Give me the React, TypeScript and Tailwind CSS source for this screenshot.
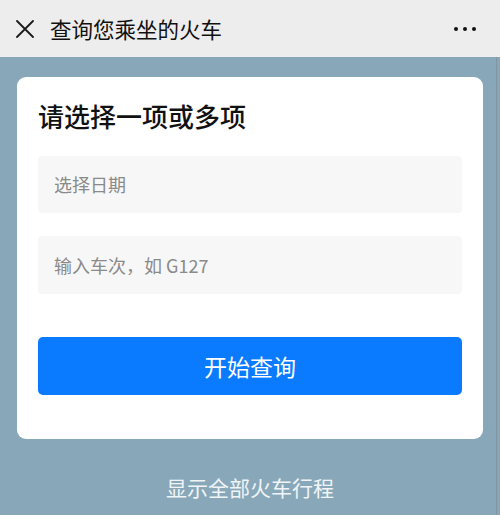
const font = { fontFamily: '"Noto Sans CJK SC", "Noto Sans", sans-serif' }

export default function App() {
  return (
    <div className="w-[500px] h-[515px] flex flex-col bg-[#88a8ba] overflow-hidden" style={font}>
      <header className="h-[57px] shrink-0 bg-[#ededed] flex items-center pl-[16px] pr-[24px]">
        <svg width="18" height="18" viewBox="0 0 18 18" className="text-[#1a1a1a]">
          <path d="M1 1L17 17M17 1L1 17" stroke="currentColor" strokeWidth="1.8" strokeLinecap="round" />
        </svg>
        <h1 className="ml-[16px] text-[21.5px] text-[#111] leading-none">查询您乘坐的火车</h1>
        <div className="ml-auto flex items-center gap-[5px]">
          <span className="w-[4px] h-[4px] rounded-full bg-[#111]" />
          <span className="w-[4px] h-[4px] rounded-full bg-[#111]" />
          <span className="w-[4px] h-[4px] rounded-full bg-[#111]" />
        </div>
      </header>

      <div className="flex-1 flex">
        <main className="flex-1 flex flex-col pt-[20px] pl-[17px]">
          <section className="w-[466px] bg-white rounded-[9px] px-[21px] pt-[21px] pb-[44px]">
            <h2 className="text-[26px] font-medium text-[#111] leading-[36px]">请选择一项或多项</h2>
            <div className="mt-[22px] h-[57px] bg-[#f7f7f7] rounded-[4px] flex items-center px-[16px] text-[18px] text-[#8a8a8a]">
              选择日期
            </div>
            <div className="mt-[23px] h-[58px] bg-[#f7f7f7] rounded-[4px] flex items-center px-[16px] text-[18px] text-[#8a8a8a]">
              输入车次，如 G127
            </div>
            <button className="mt-[43px] w-full h-[58px] bg-[#0a7aff] rounded-[5px] flex items-center justify-center text-[23px] text-white">
              开始查询
            </button>
          </section>
          <p className="mt-[33px] w-[466px] text-center text-[21px] text-[#f0f4f6]">显示全部火车行程</p>
        </main>
        <div className="w-[4px] bg-[#8ea4b2] border-l border-[#7f98a8]" />
      </div>
    </div>
  )
}
